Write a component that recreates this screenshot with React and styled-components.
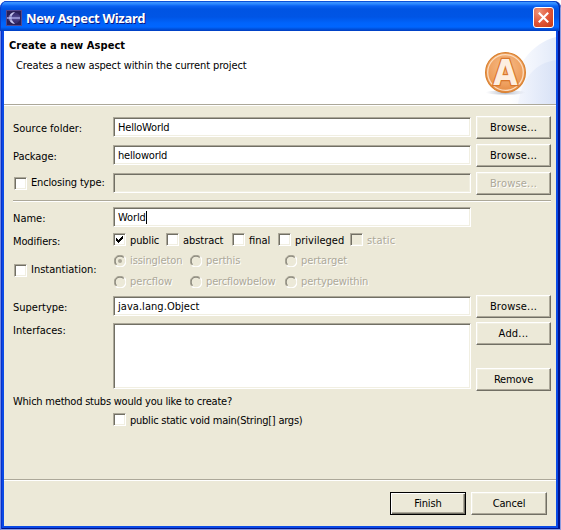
import React from "react";
import styled, { createGlobalStyle, css } from "styled-components";

const Global = createGlobalStyle`
  *{box-sizing:border-box}
  body{margin:0;background:#fff;overflow:hidden}
`;
const FACE = "#ece9d8";

const Window = styled.main`
  width:561px;height:529px;margin-top:1px;display:flex;flex-direction:column;
  font:11px/14px "DejaVu Sans Condensed","Noto Sans",sans-serif;color:#000;
  background:#0a4ae6;border-radius:7px 7px 0 0;overflow:hidden;
  box-shadow:inset 1px 0 #7088e4,inset -1px -1px #8c9ce0,inset 2px 0 #0831c8,inset -3px -2px #00138c;
`;
const TitleBar = styled.header`
  height:30px;flex:none;display:flex;align-items:center;padding:3px 7px 0 6px;margin-right:1px;
  background:linear-gradient(#0a50d8 0,#0a50d8 1px,#3a93ff 1.5px,#2a86ff 3px,#0a62f2 5px,#0054e3 8px,#0055e5 16px,#0064fb 22px,#0066ff 26px,#0051dc 28px,#003cc0 30px);
  box-shadow:inset 1px 0 #0a3cc8,inset -1px 0 #0028a0;border-radius:7px 7px 0 0;
`;
const Title = styled.h1`
  margin:0 auto 0 4px;padding-top:1px;font:bold 13px/16px "Noto Sans",sans-serif;color:#fff;
  text-shadow:1px 1px 0 #0a1883;letter-spacing:-0.3px;white-space:nowrap;
`;
const CloseButton = styled.button`
  width:21px;height:21px;padding:0;border:1px solid #fff;border-radius:3px;display:grid;place-items:center;margin-right:-1px;
  background:radial-gradient(circle at 25% 20%,#ee9478 0,#e2573a 50%,#c33a14 100%);
`;
const Frame = styled.div`
  flex:1;min-height:0;display:flex;flex-direction:column;background:${FACE};margin:0 5px 4px 4px;
`;
const Banner = styled.section`
  height:75px;flex:none;background:#fff;border-bottom:1px solid #fff;
  display:flex;justify-content:space-between;box-shadow:inset 0 -1px #aca899;
`;
const BannerText = styled.div`padding:8px 0 0 5px;`;
const Heading = styled.h2`margin:0 0 6px;font-size:11px;line-height:14px;letter-spacing:0.07px;`;
const Text = styled.span`
  white-space:pre;letter-spacing:${(p) => p.$ls || 0}px;
  ${(p) => p.$off && css`color:#aca899;text-shadow:1px 1px 0 #fff;`}
`;
const Indent = styled.div`padding-left:7px;`;
const Form = styled.section`flex:none;height:373px;padding:10px 5px 0 9px;display:flex;flex-direction:column;`;
const Row = styled.div`
  display:grid;column-gap:5px;
  grid-template-columns:95px 358px 75px;height:${(p) => p.$h}px;align-items:start;flex:none;
`;
const Label = styled.label`display:flex;align-items:center;gap:4px;padding-top:${(p) => p.$t ?? 6}px;padding-left:${(p) => p.$l || 0}px;margin-right:-5px;white-space:nowrap;`;
const sunken = css`
  border:1px solid;border-color:#aca899 #fff #fff #aca899;
  box-shadow:inset 1px 1px #716f64,inset -1px -1px #f1efe2;
`;
const Field = styled.div`
  ${sunken}width:358px;height:${(p) => p.$h || 20}px;margin-top:${(p) => p.$t ?? 1}px;
  padding:3px 0 0 4px;background:${(p) => (p.$off ? FACE : "#fff")};display:flex;
`;
const Caret = styled.i`width:1px;height:13px;background:#000;`;
const Button = styled.button`
  width:${(p) => p.$w || 75}px;height:23px;padding:1px 0 0;background:${FACE};font:inherit;color:#000;
  border:1px solid;border-color:#fff #716f64 #716f64 #fff;box-shadow:inset -1px -1px #aca899,inset 1px 1px #f1efe2;
  ${(p) => p.$primary && css`border-color:#000;box-shadow:inset 1px 1px #fff,inset -1px -1px #716f64,inset -2px -2px #aca899;`}
`;
const Box = styled.span`${sunken}width:13px;height:13px;flex:none;background:${(p) => (p.$off ? FACE : "#fff")};display:grid;place-items:center;`;
const Rule = styled.hr`margin:0;width:100%;border:0;height:2px;flex:none;background:linear-gradient(#aca899 50%,#fff 50%);`;
const Modifiers = styled.div`display:grid;grid-template-columns:53px 66px 46px 72px 60px;`;
const Option = styled.label`
  display:flex;gap:4px;align-items:center;height:13px;white-space:nowrap;
  ${Text}{padding-top:${(p) => (p.$flush ? 0 : 2)}px;}
`;
const Radios = styled.div`display:grid;grid-template-columns:76px 95px 90px;row-gap:8px;padding:1px 0 0 1px;`;
const ListButtons = styled.div`display:flex;flex-direction:column;gap:23px;`;
const Question = styled.p`margin:0;padding-top:1px;`;
const Stub = styled.div`padding:4px 0 0 100px;`;
const Footer = styled.footer`flex:1;display:flex;justify-content:flex-end;gap:5px;padding:11px 9px 0 0;`;
const Letter = styled.text`font:bold 35px "DejaVu Sans Condensed",sans-serif;fill:#fdeee0;stroke:#d9772b;stroke-width:2.4px;paint-order:stroke;stroke-linejoin:miter;`;

const Check = ({ on, off }) => (
  <Box $off={off}>{on && <svg width="7" height="7" viewBox="0 0 7 7" shapeRendering="crispEdges"><path d="M0 2h1v1h1v1h1V3h1V2h1V1h1V0h1v3H6v1H5v1H4v1H3v1H2V6H1V5H0z" /></svg>}</Box>
);
const Radio = ({ on }) => (
  <svg width="12" height="12" viewBox="0 0 12 12">
    <path d="M10.2 1.8A5.5 5.5 0 0 1 1.8 10.2" fill="none" stroke="#fff" strokeWidth="1.3" />
    <path d="M1.8 10.2A5.5 5.5 0 0 1 10.2 1.8" fill="none" stroke="#aca899" />
    <path d="M2.5 9.5A4.5 4.5 0 0 1 9.5 2.5" fill="none" stroke="#716f64" />
    {on && <circle cx="6" cy="6" r="2" fill="#aca899" />}
  </svg>
);
const EclipseIcon = () => (
  <svg width="16" height="16" viewBox="0 0 16 16">
    <rect x=".5" y=".5" width="15" height="15" fill="#2a2058" stroke="#55488c" />
    <circle cx="8.5" cy="8" r="5.6" fill="#3c3275" />
    <path d="M9 2a6 6 0 0 0 0 12A8.5 8.5 0 0 1 5.5 8 8.5 8.5 0 0 1 9 2z" fill="#c9c8f0" />
    <path d="M2 6.2h12M2 9.8h12" stroke="#5d559c" strokeWidth=".7" />
    <path d="M1 8h13" stroke="#aaa8e6" strokeWidth="1.4" />
  </svg>
);
const BannerArt = () => (
  <svg width="100" height="73" viewBox="0 0 100 73">
    <defs>
      <linearGradient id="sky" x1="0" x2="1"><stop offset="0" stopColor="#fff" /><stop offset=".6" stopColor="#eff3fc" /><stop offset="1" stopColor="#e2eaf9" /></linearGradient>
      <linearGradient id="sky2" x1="0" x2="1"><stop offset="0" stopColor="#f2f5fd" /><stop offset="1" stopColor="#d8e2f6" /></linearGradient>
      <radialGradient id="coin" cx=".5" cy=".35" r=".65"><stop offset="0" stopColor="#f6be8c" /><stop offset=".7" stopColor="#ee9e5c" /><stop offset="1" stopColor="#e48a42" /></radialGradient>
      <linearGradient id="shade"><stop offset="0" stopColor="#c4cad8" stopOpacity="0" /><stop offset=".5" stopColor="#b4bccb" /><stop offset="1" stopColor="#c4cad8" stopOpacity="0" /></linearGradient>
    </defs>
    <path d="M52 73C56 36 76 12 100 6V73z" fill="url(#sky)" />
    <path d="M62 73C66 46 80 32 100 29V73z" fill="url(#sky2)" />
    <ellipse cx="49.5" cy="61.5" rx="20" ry="2" fill="url(#shade)" />
    <circle cx="49.5" cy="41.5" r="19.9" fill="url(#coin)" stroke="#d9812f" strokeWidth="1.2" />
    <circle cx="49.5" cy="41.5" r="17.8" fill="none" stroke="#fbdcbd" strokeWidth="1.3" />
    <Letter x="49.5" y="54" textAnchor="middle">A</Letter>
  </svg>
);

const modifiers = [["public", -0.1], ["abstract", -0.05], ["final", 0], ["privileged", 0], ["static", 0.2]];
const kinds = [["issingleton", -0.1], ["perthis", 0], ["pertarget", -0.05], ["percflow", 0], ["percflowbelow", -0.15], ["pertypewithin", -0.1]];
const Browse = ({ off }) => <Button><Text $off={off} $ls={0.2}>Browse...</Text></Button>;

export default function App() {
  return (
    <><Global />
      <Window>
        <TitleBar>
          <EclipseIcon />
          <Title>New Aspect Wizard</Title>
          <CloseButton aria-label="Close"><svg width="11" height="11" viewBox="0 0 11 11"><path d="M.8.8l9.4 9.4M10.2.8L.8 10.2" stroke="#fff" strokeWidth="2.1" /></svg></CloseButton>
        </TitleBar>
        <Frame>
          <Banner>
            <BannerText><Heading>Create a new Aspect</Heading><Indent><Text $ls={-0.11}>Creates a new aspect within the current project</Text></Indent></BannerText>
            <BannerArt />
          </Banner>
          <Form>
            <Row $h={28}><Label><Text>Source folder:</Text></Label><Field><Text $ls={-0.2}>HelloWorld</Text></Field><Browse /></Row>
            <Row $h={28}><Label><Text $ls={-0.05}>Package:</Text></Label><Field><Text $ls={-0.2}>helloworld</Text></Field><Browse /></Row>
            <Row $h={28}><Label $t={4} $l={1}><Check /><Text $ls={-0.15}>Enclosing type:</Text></Label><Field $off /><Browse off /></Row>
            <Rule />
            <Row $h={31}><Label $t={10}><Text>Name:</Text></Label><Field $t={5}><Text $ls={-0.1}>World</Text><Caret /></Field></Row>
            <Row $h={20}><Label $t={2}><Text $ls={-0.12}>Modifiers:</Text></Label>
              <Modifiers>{modifiers.map(([t, ls], i) => <Option key={t}><Check on={i === 0} off={i === 4} /><Text $ls={ls} $off={i === 4}>{t}</Text></Option>)}</Modifiers></Row>
            <Row $h={42}><Label $t={10} $l={1}><Check /><Text>Instantiation:</Text></Label>
              <Radios>{kinds.map(([t, ls], i) => <Option $flush key={t}><Radio on={i === 0} /><Text $off $ls={ls}>{t}</Text></Option>)}</Radios></Row>
            <Row $h={27}><Label><Text>Supertype:</Text></Label><Field><Text $ls={0.05}>java.lang.Object</Text></Field><Browse /></Row>
            <Row $h={72}><Label $t={2}><Text>Interfaces:</Text></Label><Field $h={66} /><ListButtons><Button><Text $ls={0.2}>Add...</Text></Button><Button><Text $ls={-0.15}>Remove</Text></Button></ListButtons></Row>
            <Question><Text $ls={-0.22}>Which method stubs would you like to create?</Text></Question>
            <Stub><Option><Check /><Text $ls={-0.24}>public static void main(String[] args)</Text></Option></Stub>
          </Form>
          <Rule />
          <Footer><Button $w={76} $primary><Text $ls={-0.1}>Finish</Text></Button><Button $w={76}><Text $ls={-0.15}>Cancel</Text></Button></Footer>
        </Frame>
      </Window>
    </>
  );
}
